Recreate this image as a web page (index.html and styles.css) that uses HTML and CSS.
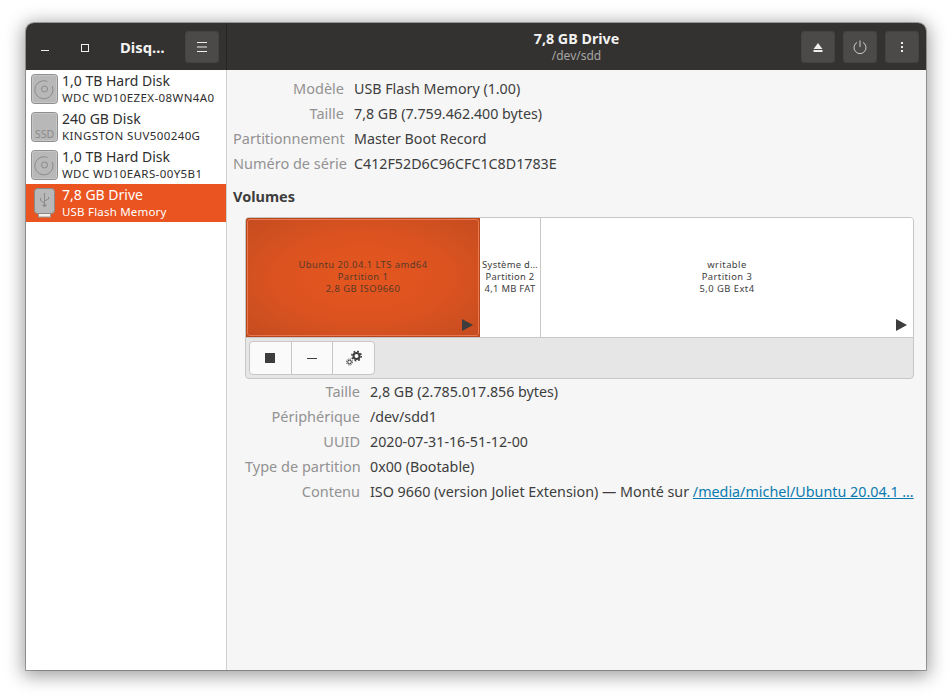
FILE: index.html
```html
<!DOCTYPE html>
<html lang="fr">
<head>
<meta charset="utf-8">
<title>Disques</title>
<link rel="stylesheet" href="styles.css">
</head>
<body>
<div class="window">
  <header class="titlebar">
    <div class="tb-left">
      <div class="wm-btn"><svg width="16" height="16" viewBox="0 0 16 16"><rect x="4" y="11" width="8" height="1" fill="#eee"/></svg></div>
      <div class="wm-btn"><svg width="16" height="16" viewBox="0 0 16 16"><rect x="4.5" y="5.5" width="7" height="7" fill="none" stroke="#eee"/></svg></div>
      <div class="app-title">Disq…</div>
      <div class="hb-btn"><svg width="16" height="16" viewBox="0 0 16 16"><path d="M3 3.5h10M3 8h10M3 12.5h10" stroke="#eee" fill="none"/></svg></div>
    </div>
    <div class="tb-right">
      <div class="tb-center">
        <div class="drive-title">7,8 GB Drive</div>
        <div class="drive-sub">/dev/sdd</div>
      </div>
      <div class="tb-actions">
        <div class="hb-btn"><svg width="16" height="16" viewBox="0 0 16 16"><path d="M8 4L12.500 10H3.500zM3.500 11h9v2h-9z" fill="#eee"/></svg></div>
        <div class="hb-btn"><svg width="16" height="16" viewBox="0 0 16 16"><path d="M8 1.500v6.500" stroke="#ccc" fill="none"/><path d="M5 3.400A6 6 0 1 0 11 3.400" stroke="#ccc" fill="none"/></svg></div>
        <div class="hb-btn"><svg width="16" height="16" viewBox="0 0 16 16"><rect x="7" y="3" width="2" height="2" fill="#eee"/><rect x="7" y="7" width="2" height="2" fill="#eee"/><rect x="7" y="11" width="2" height="2" fill="#eee"/></svg></div>
      </div>
    </div>
  </header>
  <div class="content">
    <aside class="sidebar">
      <div class="drive-row">
        <svg class="drive-icon" width="27" height="30" viewBox="0 0 27 30"><rect x="0.500" y="0.500" width="26" height="29" rx="3" fill="#b8b8b8" stroke="#8f8f8f"/><rect x="1.500" y="1.500" width="24" height="27" rx="2" fill="none" stroke="#c6c6c6"/><path d="M16.500 7.500A9 9 0 1 0 21.100 12" fill="none" stroke="#8a8a8a"/><circle cx="13.500" cy="15" r="3" fill="none" stroke="#8a8a8a"/></svg>
        <div class="drive-text"><div class="dt-name">1,0 TB Hard Disk</div><div class="dt-model">WDC WD10EZEX-08WN4A0</div></div>
      </div>
      <div class="drive-row">
        <svg class="drive-icon" width="27" height="30" viewBox="0 0 27 30"><rect x="0.500" y="0.500" width="26" height="29" rx="3" fill="#b8b8b8" stroke="#8f8f8f"/><rect x="1.500" y="1.500" width="24" height="27" rx="2" fill="none" stroke="#c6c6c6"/><text x="13.500" y="26" text-anchor="middle" class="ssd-label">SSD</text></svg>
        <div class="drive-text"><div class="dt-name">240 GB Disk</div><div class="dt-model">KINGSTON SUV500240G</div></div>
      </div>
      <div class="drive-row">
        <svg class="drive-icon" width="27" height="30" viewBox="0 0 27 30"><rect x="0.500" y="0.500" width="26" height="29" rx="3" fill="#b8b8b8" stroke="#8f8f8f"/><rect x="1.500" y="1.500" width="24" height="27" rx="2" fill="none" stroke="#c6c6c6"/><path d="M16.500 7.500A9 9 0 1 0 21.100 12" fill="none" stroke="#8a8a8a"/><circle cx="13.500" cy="15" r="3" fill="none" stroke="#8a8a8a"/></svg>
        <div class="drive-text"><div class="dt-name">1,0 TB Hard Disk</div><div class="dt-model">WDC WD10EARS-00Y5B1</div></div>
      </div>
      <div class="drive-row selected">
        <svg class="drive-icon" width="27" height="32" viewBox="0 0 27 32"><rect x="7.500" y="25" width="12" height="5" fill="#f4f0ea" stroke="#999"/><rect x="3.500" y="1.500" width="20" height="25" rx="3" fill="#b8b8b8" stroke="#8a8a8a"/><path d="M13.500 6v14M13.500 20l-2-2h4zM13.500 16l-4-2.500V11M13.500 14l4-2v-2" fill="none" stroke="#8a8a8a"/></svg>
        <div class="drive-text"><div class="dt-name">7,8 GB Drive</div><div class="dt-model">USB Flash Memory</div></div>
      </div>
    </aside>
    <main class="main">
      <dl class="props props-drive">
        <dt>Modèle</dt><dd>USB Flash Memory (1.00)</dd>
        <dt>Taille</dt><dd>7,8 GB (7.759.462.400 bytes)</dd>
        <dt>Partitionnement</dt><dd>Master Boot Record</dd>
        <dt>Numéro de série</dt><dd>C412F52D6C96CFC1C8D1783E</dd>
      </dl>
      <h2 class="volumes">Volumes</h2>
      <div class="volbox">
        <div class="partitions">
          <div class="part part-1">
            <div class="part-inner">Ubuntu 20.04.1 LTS amd64<br>Partition 1<br>2,8 GB ISO9660</div>
            <svg class="play" width="11" height="12" viewBox="0 0 11 12"><path d="M0 0L11 6L0 12z" fill="#3d3d3d"/></svg>
          </div>
          <div class="part part-2"><div class="part-inner">Système d…<br>Partition 2<br>4,1 MB FAT</div></div>
          <div class="part part-3">
            <div class="part-inner">writable<br>Partition 3<br>5,0 GB Ext4</div>
            <svg class="play" width="11" height="12" viewBox="0 0 11 12"><path d="M0 0L11 6L0 12z" fill="#3d3d3d"/></svg>
          </div>
        </div>
        <div class="toolbar">
          <div class="tool-group">
            <div class="tool"><svg width="16" height="16" viewBox="0 0 16 16"><rect x="3" y="3" width="10" height="10" fill="#3d3d3d"/></svg></div>
            <div class="tool"><svg width="16" height="16" viewBox="0 0 16 16"><rect x="3" y="8" width="10" height="1" fill="#3d3d3d"/></svg></div>
            <div class="tool"><svg width="16" height="16" viewBox="0 0 16 16"><circle cx="10.500" cy="6" r="3" fill="none" stroke="#3d3d3d" stroke-width="2"/><circle cx="10.500" cy="6" r="4.700" fill="none" stroke="#3d3d3d" stroke-width="1.500" stroke-dasharray="1.800 1.900"/><circle cx="3.500" cy="12" r="1.800" fill="none" stroke="#3d3d3d"/><circle cx="3.500" cy="12" r="3" fill="none" stroke="#3d3d3d" stroke-dasharray="1.200 1.150"/></svg></div>
          </div>
        </div>
      </div>
      <dl class="props props-part">
        <dt>Taille</dt><dd>2,8 GB (2.785.017.856 bytes)</dd>
        <dt>Périphérique</dt><dd>/dev/sdd1</dd>
        <dt>UUID</dt><dd>2020-07-31-16-51-12-00</dd>
        <dt>Type de partition</dt><dd>0x00 (Bootable)</dd>
        <dt>Contenu</dt><dd>ISO 9660 (version Joliet Extension) — Monté sur <a class="mount" href="#">/media/michel/Ubuntu 20.04.1 …</a></dd>
      </dl>
    </main>
  </div>
</div>
</body>
</html>
```
FILE: styles.css
```css
* { box-sizing: border-box; }
html, body { margin: 0; height: 100%; }
body {
  background: #fff;
  padding: 23px 26px 29px;
  font-family: "Noto Sans", "Open Sans", sans-serif;
  font-size: 14.5px;
  color: #3d3d3d;
  overflow: hidden;
}
.window {
  width: 900px;
  height: 647px;
  display: flex;
  flex-direction: column;
  border-radius: 8px 8px 0 0;
  box-shadow: 0 0 0 1px rgba(0,0,0,.28), 0 3px 18px 3px rgba(0,0,0,.38);
  background: #f6f6f6;
}
.titlebar {
  height: 47px;
  flex: none;
  display: flex;
  background: #333231;
  border-radius: 8px 8px 0 0;
  color: #f2f2f2;
}
.tb-left {
  width: 201px;
  flex: none;
  display: flex;
  align-items: center;
  border-right: 1px solid #262524;
  padding-left: 11px;
}
.wm-btn { width: 16px; height: 16px; margin-right: 24px; }
.wm-btn + .wm-btn { margin-right: 0; }
.app-title { width: 67px; margin-left: 27px; font-weight: 700; font-size: 14.8px; white-space: nowrap; }
.hb-btn {
  width: 34px;
  height: 32px;
  background: #4b4a48;
  border-radius: 4px;
  display: flex;
  align-items: center;
  justify-content: center;
  box-shadow: inset 0 0 0 1px #444341;
}
.tb-left .hb-btn { margin-left: -2px; }
.tb-right {
  flex: 1;
  position: relative;
  display: flex;
  align-items: center;
  justify-content: flex-end;
  padding-right: 7px;
}
.tb-center {
  position: absolute;
  left: 0;
  right: 0;
  top: 7px;
  text-align: center;
}
.drive-title { font-weight: 700; font-size: 14.3px; line-height: 18px; }
.drive-sub { font-size: 12px; line-height: 15px; color: #a6a5a3; }
.tb-actions { display: flex; gap: 8px; position: relative; }
.content { flex: 1; display: flex; min-height: 0; }
.sidebar {
  width: 201px;
  flex: none;
  background: #fff;
  border-right: 1px solid #d0d0cf;
}
.drive-row {
  height: 38px;
  display: flex;
  align-items: center;
  padding-left: 5px;
  color: #2e2e2e;
}
.drive-row.selected { background: #e95420; color: #fff; }
.drive-icon { flex: none; margin-right: 4px; }
.ssd-label { font-size: 10.500px; fill: #8a8a8a; font-family: "Noto Sans", sans-serif; }
.drive-text { margin-top: -2px; }
.dt-name { font-size: 14px; line-height: 19px; white-space: nowrap; }
.dt-model { font-size: 11.500px; line-height: 14px; letter-spacing: .4px; white-space: nowrap; margin-top: 1px; }
.selected .dt-model { letter-spacing: .2px; }
.main { flex: 1; padding: 6px 12px 0 6px; min-width: 0; }
.props { display: grid; margin: 0; }
.props dt { text-align: right; color: #929292; line-height: 25px; white-space: nowrap; }
.props dd { margin: 0; line-height: 25px; white-space: nowrap; font-size: 14.25px; }
.props-drive { grid-template-columns: 111px 1fr; column-gap: 10px; }
.props-part { grid-template-columns: 115px 1fr; column-gap: 10px; margin-left: 12px; }
.props-part dd:last-child { font-size: 14.32px; }
.mount { color: #0a7bb0; }
.volumes { margin: 10px 0 11px; font-size: 14.500px; line-height: 20px; font-weight: 700; color: #3d3d3d; }
.volbox {
  margin-left: 12px;
  height: 162px;
  border: 1px solid #c7c7c6;
  border-radius: 4px;
  background: #e6e6e6;
  overflow: hidden;
}
.partitions { display: flex; height: 120px; border-bottom: 1px solid #c7c7c6; background: #fff; }
.part {
  position: relative;
  display: flex;
  align-items: center;
  justify-content: center;
  text-align: center;
  font-size: 9.400px;
  line-height: 12px;
  letter-spacing: .45px;
  color: #3d3d3d;
  white-space: nowrap;
}
.part-inner { margin-top: -1px; }
.part-1 {
  width: 234px;
  color: #5a3a28;
  background: radial-gradient(ellipse at center, #e5561f 0%, #dc5320 50%, #c44c20 100%);
  box-shadow: inset 0 0 0 1px #b8471c;
}
.part-1::after {
  content: "";
  position: absolute;
  inset: 1px;
  border: 1px solid #e8764e;
  border-radius: 3px;
}
.part-1 .play { right: 7px; }
.part-2 { width: 61px; border-right: 1px solid #c7c7c6; letter-spacing: .3px; }
.part-3 { flex: 1; }
.play { position: absolute; right: 6px; bottom: 6px; z-index: 1; }
.toolbar { padding: 3px 3px; }
.tool-group {
  display: flex;
  width: 126px;
  height: 34px;
  background: #fafafa;
  border: 1px solid #c7c7c6;
  border-radius: 4px;
}
.tool {
  flex: 1;
  display: flex;
  align-items: center;
  justify-content: center;
  border-right: 1px solid #c7c7c6;
}
.tool:last-child { border-right: 0; }
```
